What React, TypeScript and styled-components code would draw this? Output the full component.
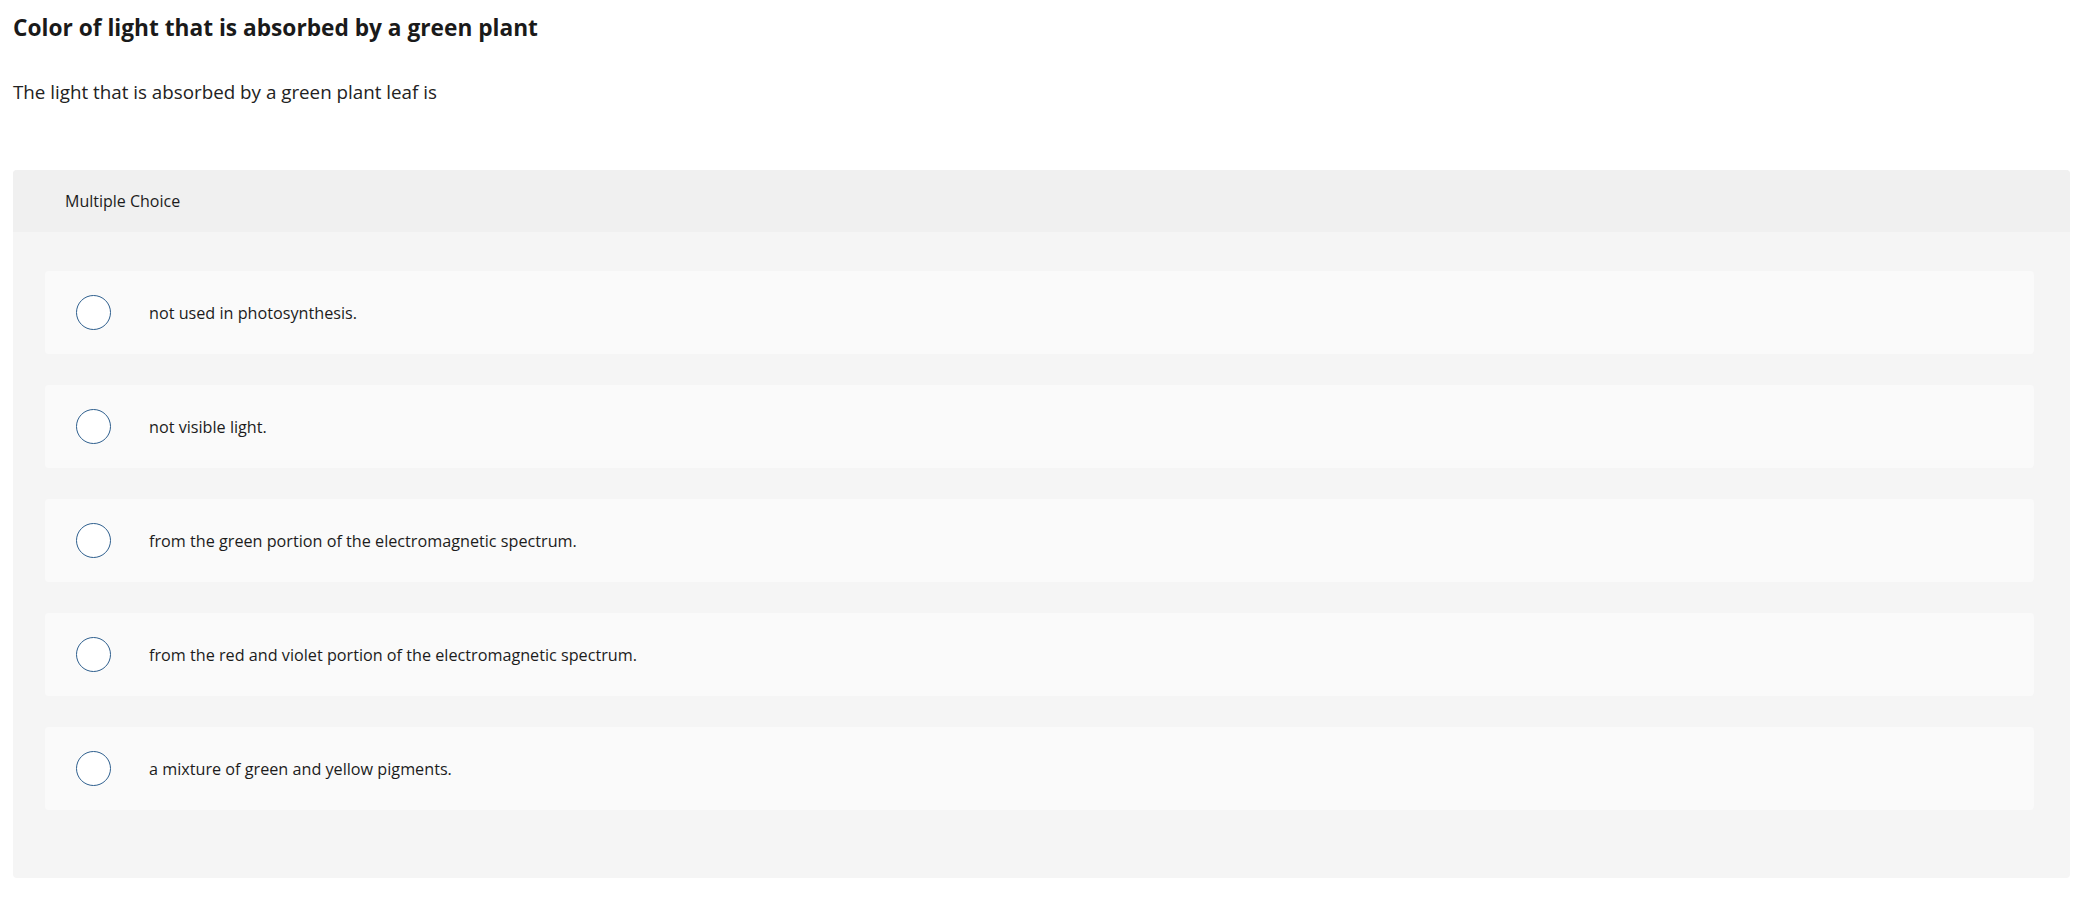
import styled, { createGlobalStyle } from "styled-components";

const GlobalStyle = createGlobalStyle`
  body {
    margin: 0;
    background: #ffffff;
    font-family: "Open Sans", "Liberation Sans", sans-serif;
    color: #1c1c1c;
  }
`;

const Page = styled.div`
  padding: 15px 17px 0 13px;
`;

const Title = styled.h1`
  margin: 0;
  font-size: 22.7px;
  line-height: 26px;
  font-weight: 700;
  color: #1a1a1a;
`;

const Prompt = styled.p`
  margin: 40px 0 0;
  font-size: 18.8px;
  line-height: 22px;
  color: #222;
`;

const Panel = styled.section`
  margin-top: 67px;
  background: #f5f5f5;
  border-radius: 4px;
  overflow: hidden;
`;

const PanelHeader = styled.div`
  height: 62px;
  display: flex;
  align-items: center;
  padding-left: 52px;
  background: #f0f0f0;
  font-size: 16px;
  color: #1c1c1c;
`;

const Options = styled.div`
  display: flex;
  flex-direction: column;
  gap: 31px;
  padding: 39px 36px 68px 32px;
`;

const Option = styled.label`
  height: 83px;
  display: flex;
  align-items: center;
  gap: 38px;
  padding-left: 31px;
  background: #fafafa;
  border-radius: 4px;
  font-size: 16.2px;
  color: #1c1c1c;
  cursor: pointer;
`;

const Radio = styled.span`
  width: 35px;
  height: 35px;
  box-sizing: border-box;
  flex: none;
  border: 1.5px solid #2e5f8e;
  border-radius: 50%;
  background: #ffffff;
`;

const choices = [
  "not used in photosynthesis.",
  "not visible light.",
  "from the green portion of the electromagnetic spectrum.",
  "from the red and violet portion of the electromagnetic spectrum.",
  "a mixture of green and yellow pigments.",
];

export default function App() {
  return (
    <>
      <GlobalStyle />
      <Page>
        <Title>Color of light that is absorbed by a green plant</Title>
        <Prompt>The light that is absorbed by a green plant leaf is</Prompt>
        <Panel>
          <PanelHeader>Multiple Choice</PanelHeader>
          <Options>
            {choices.map((c) => (
              <Option key={c}>
                <Radio />
                <span>{c}</span>
              </Option>
            ))}
          </Options>
        </Panel>
      </Page>
    </>
  );
}
